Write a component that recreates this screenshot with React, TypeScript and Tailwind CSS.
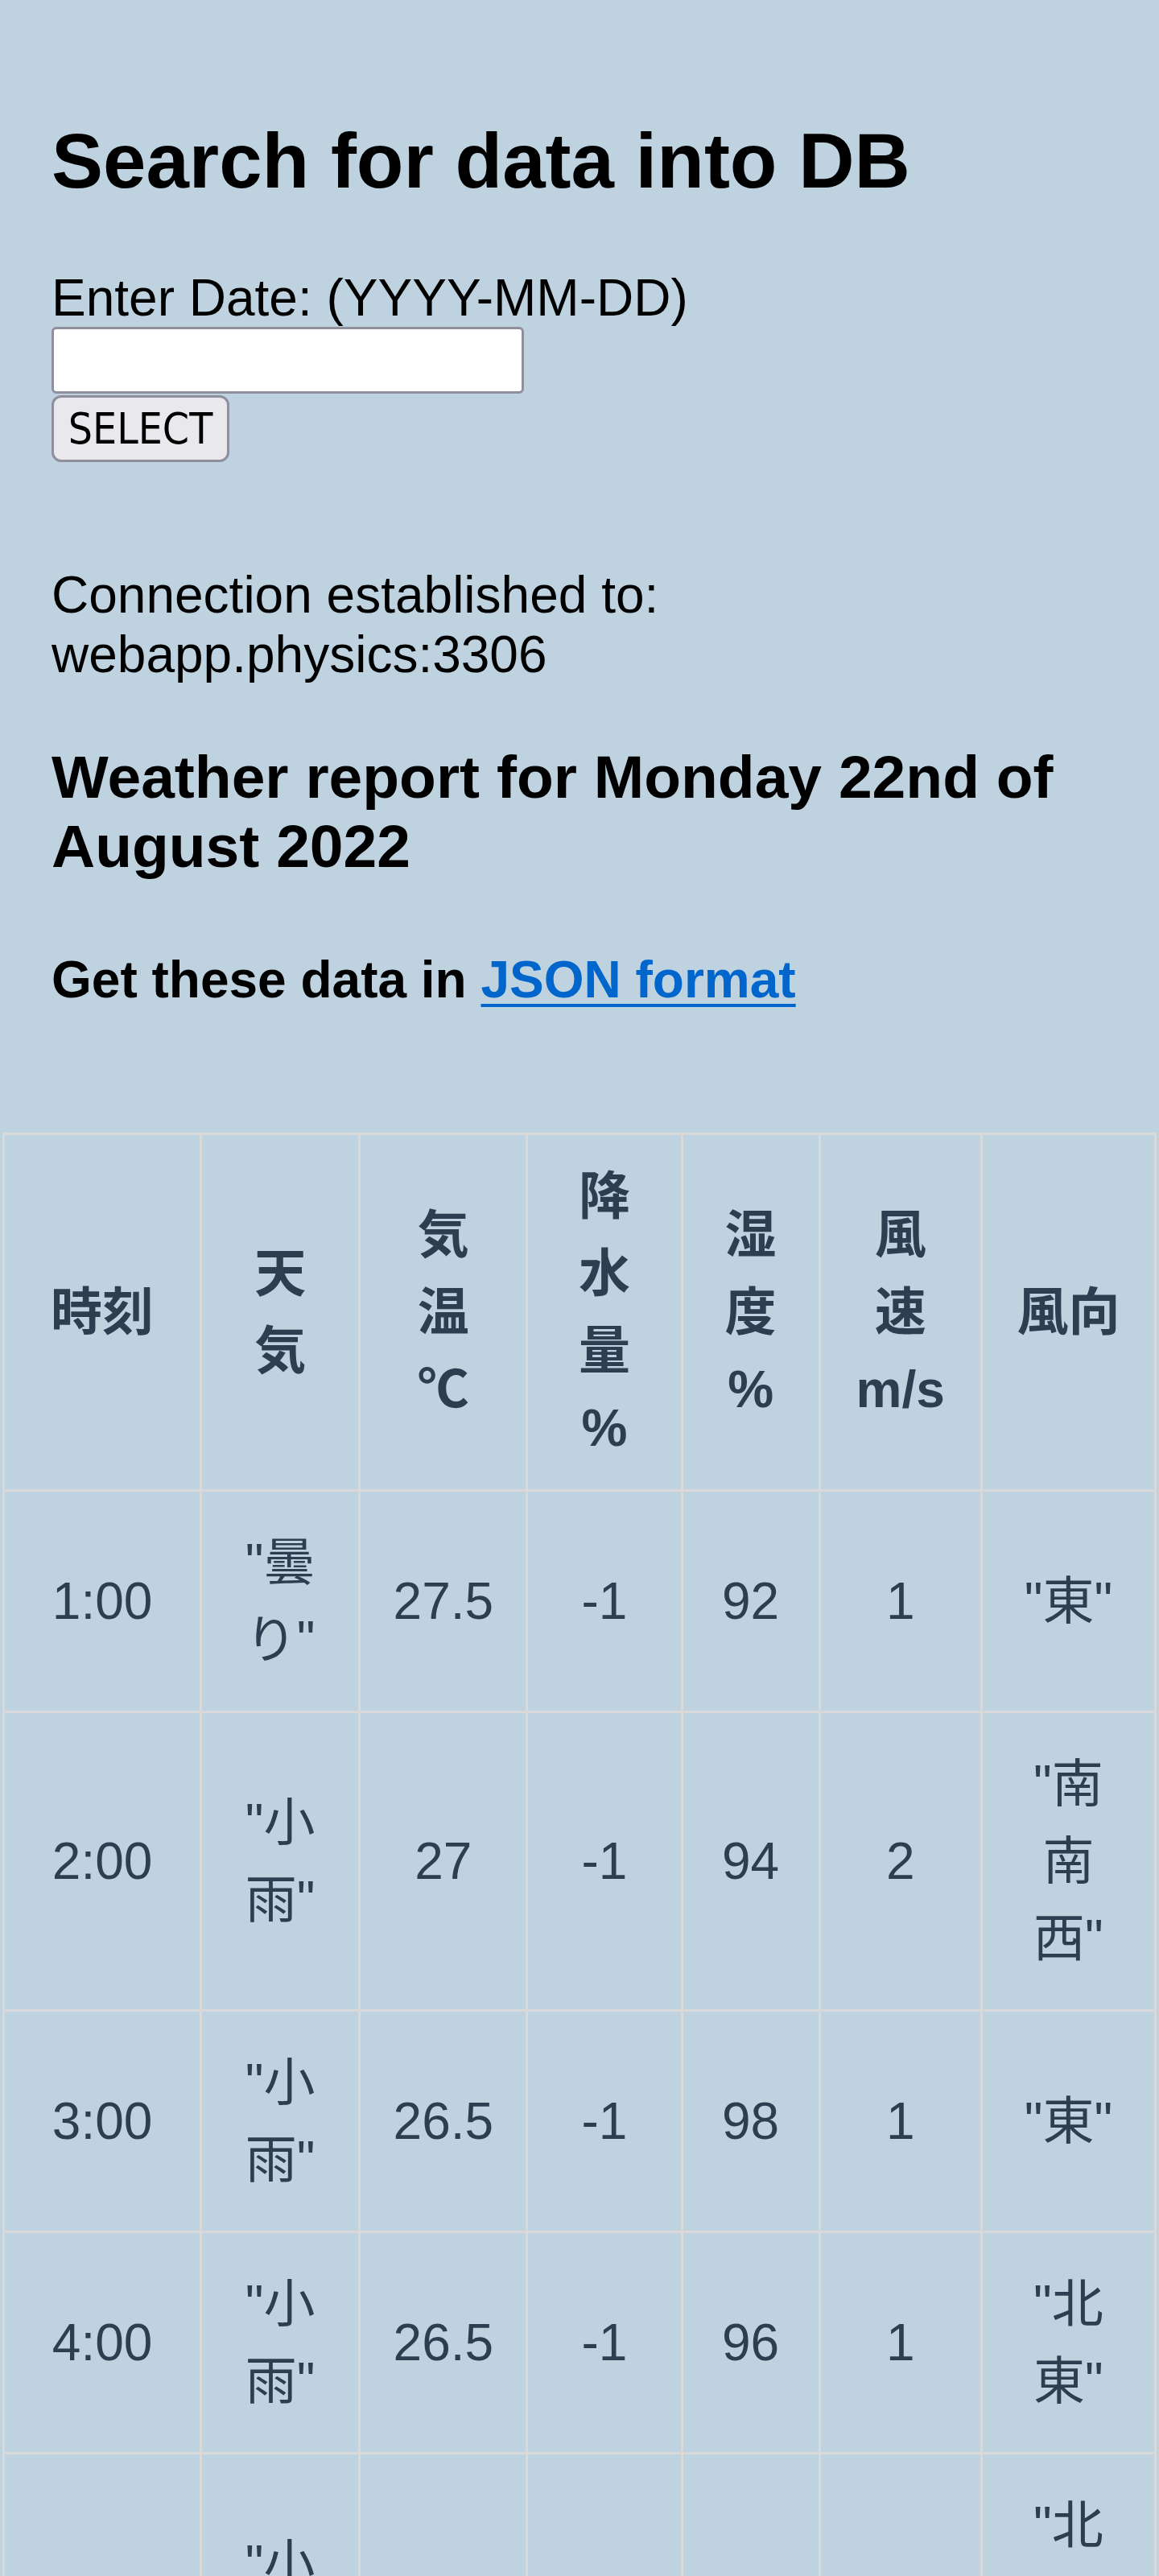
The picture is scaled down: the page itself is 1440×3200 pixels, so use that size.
const headers = ['時刻', '天気', '気温 ℃', '降水量 %', '湿度 %', '風速 m/s', '風向'];

const colWidths = [245, 197, 208, 192, 171, 201, 216];

const rows = [
  ['1:00', '"曇り"', '27.5', '-1', '92', '1', '"東"'],
  ['2:00', '"小雨"', '27', '-1', '94', '2', '"南南西"'],
  ['3:00', '"小雨"', '26.5', '-1', '98', '1', '"東"'],
  ['4:00', '"小雨"', '26.5', '-1', '96', '1', '"北東"'],
  ['5:00', '"小雨"', '26', '-1', '97', '1', '"北北東"'],
  ['6:00', '"小雨"', '26', '-1', '97', '1', '"北"'],
];

export default function App() {
  return (
    <div className="min-h-[3200px] bg-[#bed2e0] font-['Liberation_Sans','Noto_Sans_CJK_JP',sans-serif] text-black">
      <div className="px-[64px] pt-[145px]">
        <h2 className="text-[96px] leading-[110px] font-bold">Search for data into DB</h2>

        <form className="mt-[79px] flex flex-col items-start">
          <label htmlFor="date" className="text-[64px] leading-[72px]">
            Enter Date: (YYYY-MM-DD)
          </label>
          <input
            id="date"
            type="text"
            className="h-[83px] w-[587px] rounded-[6px] border-[3px] border-[#8f8f9d] bg-white"
          />
          <button
            type="button"
            className="mt-[2px] h-[83px] w-[221px] rounded-[12px] border-[3px] border-[#8f8f9d] bg-[#e9e9ed] text-center font-['DejaVu_Sans_Condensed','DejaVu_Sans',sans-serif] text-[53px] leading-none text-black"
          >
            SELECT
          </button>
        </form>

        <p className="mt-[128px] text-[64px] leading-[74px]">
          Connection established to:
          <br />
          webapp.physics:3306
        </p>

        <h3 className="mt-[72px] text-[75px] leading-[86px] font-bold">
          Weather report for Monday 22nd of August 2022
        </h3>

        <h4 className="mt-[86px] text-[64px] leading-[74px] font-bold">
          Get these data in{' '}
          <a href="#" className="text-[#0066cc] underline decoration-[4px] underline-offset-[8px]">
            JSON format
          </a>
        </h4>
      </div>

      <div className="mt-[153px] px-[3px]">
        <table className="w-full table-fixed border-collapse text-center text-[64px] text-[#2c3e50]">
          <colgroup>
            {colWidths.map((w, i) => (
              <col key={i} style={{ width: w }} />
            ))}
          </colgroup>
          <thead>
            <tr>
              {headers.map((h) => (
                <th
                  key={h}
                  className="border-[3px] border-[#d9d9d9] px-[40px] py-[28px] align-middle leading-[96px] font-bold"
                >
                  {h}
                </th>
              ))}
            </tr>
          </thead>
          <tbody>
            {rows.map((r) => (
              <tr key={r[0]}>
                {r.map((c, i) => (
                  <td
                    key={i}
                    className="border-[3px] border-[#d9d9d9] p-[40px] align-middle leading-[96px] font-normal"
                  >
                    {c}
                  </td>
                ))}
              </tr>
            ))}
          </tbody>
        </table>
      </div>
    </div>
  );
}
